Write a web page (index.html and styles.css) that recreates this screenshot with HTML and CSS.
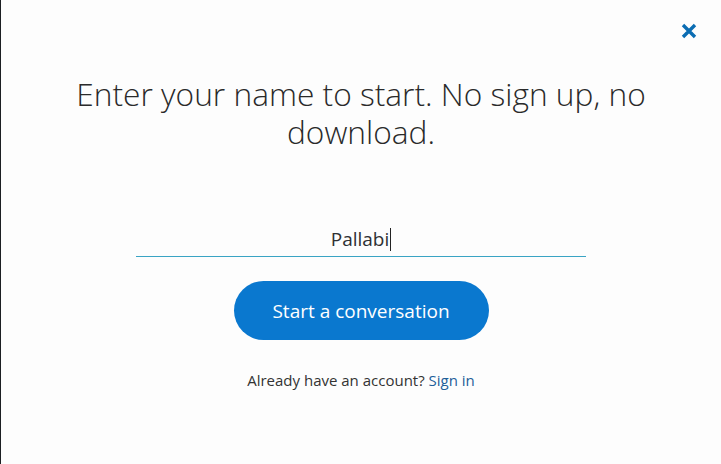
FILE: index.html
```html
<!DOCTYPE html>
<html>
<head>
<meta charset="utf-8">
<link rel="stylesheet" href="styles.css">
</head>
<body>
<div class="frame">
  <button class="close" aria-label="Close">
    <svg width="16" height="16" viewBox="0 0 16 16"><path d="M2 2 L14 14 M14 2 L2 14" stroke="#0b6db3" stroke-width="3.4" stroke-linecap="butt"/></svg>
  </button>
  <main class="content">
    <h1 class="title">Enter your name to start. No sign up, no download.</h1>
    <div class="field"><span class="value">Pallabi</span><span class="caret"></span></div>
    <button class="cta">Start a conversation</button>
    <p class="signin">Already have an account? <a href="#">Sign in</a></p>
  </main>
</div>
</body>
</html>
```
FILE: styles.css
```css
html, body { margin: 0; padding: 0; }
body { background: #fdfdfd; font-family: "Open Sans", "Noto Sans", sans-serif; }
.frame {
  position: relative;
  height: 464px;
  box-sizing: border-box;
  border-left: 1px solid #1c1f22;
  overflow: hidden;
}
.close {
  position: absolute;
  top: 23px;
  right: 24px;
  width: 16px;
  height: 16px;
  padding: 0;
  border: 0;
  background: none;
}
.close svg { display: block; }
.content {
  display: flex;
  flex-direction: column;
  align-items: center;
  padding-top: 75px;
}
.title {
  margin: 0;
  width: 610px;
  text-align: center;
  font-weight: 300;
  font-size: 31.7px;
  line-height: 38px;
  color: #2a2a2a;
}
.field {
  margin-top: 72px;
  width: 450px;
  height: 31px;
  padding-bottom: 2px;
  border-bottom: 1px solid #3aa4c4;
  display: flex;
  justify-content: center;
  align-items: center;
  font-size: 19px;
  color: #2f3033;
}
.caret {
  display: inline-block;
  width: 1px;
  height: 23px;
  background: #222;
  margin-left: 1px;
  margin-top: 2px;
}
.cta {
  margin-top: 24px;
  width: 255px;
  height: 59px;
  border: 0;
  border-radius: 30px;
  background: #0a78cf;
  color: #fff;
  font-family: "Open Sans", "Noto Sans", sans-serif;
  font-size: 19px;
}
.signin {
  margin: 30px 0 0;
  font-size: 15px;
  color: #333;
}
.signin a { color: #1f5f99; text-decoration: none; }
```
